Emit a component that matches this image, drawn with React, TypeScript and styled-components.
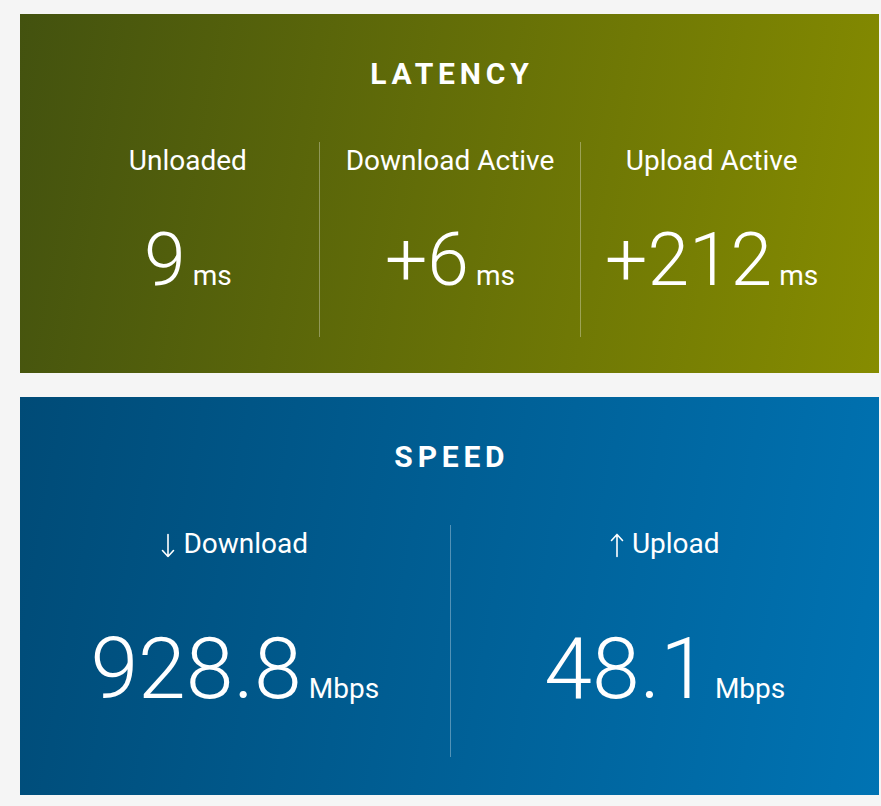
import React from "react";
import styled, { createGlobalStyle } from "styled-components";

const GlobalStyle = createGlobalStyle`
  html, body {
    margin: 0;
    background: #f5f5f5;
  }
  body {
    padding: 14px 2px 11px 20px;
    font-family: Roboto, "Noto Sans", Arial, sans-serif;
    color: #ffffff;
  }
`;

const Page = styled.div`
  display: flex;
  flex-direction: column;
  gap: 24px;
`;

const Card = styled.section<{ $from: string; $to: string; $bottom: number }>`
  background: linear-gradient(100deg, ${(p) => p.$from}, ${(p) => p.$to});
  padding: 42px 0 ${(p) => p.$bottom}px;
`;

const Title = styled.h2`
  margin: 0;
  font-size: 30px;
  line-height: 36px;
  font-weight: 700;
  letter-spacing: 4.8px;
  text-align: center;
  text-indent: 4.8px;
`;

const Row = styled.div<{ $cols: number; $pad: number }>`
  display: grid;
  grid-template-columns: repeat(${(p) => p.$cols}, 1fr);
  padding: 0 ${(p) => p.$pad}px;
  margin-top: 50px;
`;

const Column = styled.div<{ $bottom: number }>`
  display: flex;
  flex-direction: column;
  align-items: center;
  padding: 2px 0 ${(p) => p.$bottom}px;

  & + & {
    border-left: 1px solid rgba(255, 255, 255, 0.32);
  }
`;

const Label = styled.div`
  font-size: 28px;
  line-height: 34px;
  font-weight: 400;
  white-space: nowrap;
`;

const Arrow = styled.svg`
  display: inline-block;
  width: 14px;
  height: 25px;
  margin-right: 8px;
  vertical-align: -5px;
`;

const Value = styled.div<{ $size: number; $gap: number }>`
  margin-top: ${(p) => p.$gap}px;
  font-size: ${(p) => p.$size}px;
  line-height: 1;
  font-weight: 300;
  white-space: nowrap;
`;

const Unit = styled.span`
  font-size: 28px;
  font-weight: 400;
  margin-left: 7px;
`;

type Metric = { label: string; value: string; unit: string; dir?: "down" | "up" };

const latency: Metric[] = [
  { label: "Unloaded", value: "9", unit: "ms" },
  { label: "Download Active", value: "+6", unit: "ms" },
  { label: "Upload Active", value: "+212", unit: "ms" },
];

const speed: Metric[] = [
  { label: "Download", value: "928.8", unit: "Mbps", dir: "down" },
  { label: "Upload", value: "48.1", unit: "Mbps", dir: "up" },
];

const DirArrow = ({ dir }: { dir: "down" | "up" }) => (
  <Arrow viewBox="0 0 14 25" fill="none" stroke="#fff" strokeWidth="1.6" strokeLinecap="round" strokeLinejoin="round">
    {dir === "down" ? (
      <path d="M7 1.5V23.5M1.5 17.5L7 23.5L12.5 17.5" />
    ) : (
      <path d="M7 23.5V1.5M1.5 7.5L7 1.5L12.5 7.5" />
    )}
  </Arrow>
);

export default function App() {
  return (
    <>
      <GlobalStyle />
      <Page>
        <Card $from="#43520f" $to="#868c00" $bottom={36}>
          <Title>LATENCY</Title>
          <Row $cols={3} $pad={37}>
            {latency.map((m) => (
              <Column key={m.label} $bottom={40}>
                <Label>{m.label}</Label>
                <Value $size={75} $gap={44}>
                  {m.value}
                  <Unit>{m.unit}</Unit>
                </Value>
              </Column>
            ))}
          </Row>
        </Card>
        <Card $from="#004b77" $to="#0073b3" $bottom={38}>
          <Title>SPEED</Title>
          <Row $cols={2} $pad={0}>
            {speed.map((m) => (
              <Column key={m.label} $bottom={45}>
                <Label>
                  {m.dir && <DirArrow dir={m.dir} />}
                  {m.label}
                </Label>
                <Value $size={86} $gap={65}>
                  {m.value}
                  <Unit>{m.unit}</Unit>
                </Value>
              </Column>
            ))}
          </Row>
        </Card>
      </Page>
    </>
  );
}
